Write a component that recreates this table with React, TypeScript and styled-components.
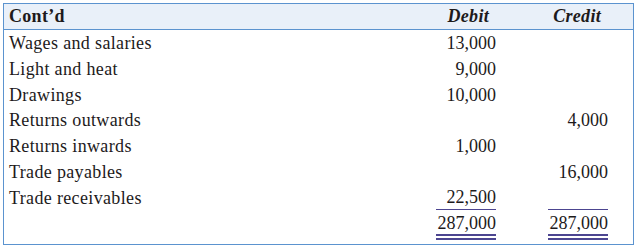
import styled, { createGlobalStyle } from 'styled-components'

const GlobalStyle = createGlobalStyle`
  html, body {
    margin: 0;
    padding: 0;
    background: #ffffff;
  }
  body {
    font-family: 'Liberation Serif', 'Times New Roman', serif;
    color: #1d1a1b;
  }
`

const Page = styled.div`
  width: 637px;
  height: 248px;
  padding: 3px 3px 0 3px;
  box-sizing: border-box;
`

const Box = styled.div`
  width: 631px;
  height: 242px;
  box-sizing: border-box;
  border: 1.5px solid #5b93cf;
  background: #fff;
`

const Grid = styled.div`
  display: grid;
  grid-template-columns: 1fr 60px 60px;
  column-gap: 52px;
  padding: 0 25px 0 5px;
`

const HeaderRow = styled(Grid)`
  height: 25px;
  align-items: center;
  background: #e9f0f9;
  border-bottom: 1.5px solid #5b93cf;
`

const Row = styled(Grid)<{ $total?: boolean }>`
  height: ${(p) => (p.$total ? '28px' : '25.75px')};
  align-items: center;
  box-sizing: border-box;
  padding-top: ${(p) => (p.$total ? '0' : '1.5px')};
`

const HeadCell = styled.div<{ $right?: boolean }>`
  font-size: 18px;
  font-weight: bold;
  font-style: ${(p) => (p.$right ? 'italic' : 'normal')};
  text-align: ${(p) => (p.$right ? 'right' : 'left')};
  padding-right: ${(p) => (p.$right ? '7px' : '0')};
  letter-spacing: 0.3px;
`

const Label = styled.div`
  font-size: 18px;
  letter-spacing: 0.35px;
  white-space: nowrap;
`

const Amount = styled.div<{ $rule?: 'single' | 'double' }>`
  font-size: 18px;
  height: 100%;
  display: flex;
  align-items: center;
  justify-content: flex-end;
  box-sizing: border-box;
  ${(p) =>
    p.$rule === 'single' &&
    `
    border-bottom: 1.5px solid #4c4590;
  `}
  ${(p) =>
    p.$rule === 'double' &&
    `
    border-bottom: 6px double #4c4590;
    padding-top: 3px;
  `}
`

type Line = { label: string; debit?: string; credit?: string }

const lines: Line[] = [
  { label: 'Wages and salaries', debit: '13,000' },
  { label: 'Light and heat', debit: '9,000' },
  { label: 'Drawings', debit: '10,000' },
  { label: 'Returns outwards', credit: '4,000' },
  { label: 'Returns inwards', debit: '1,000' },
  { label: 'Trade payables', credit: '16,000' },
]

export default function App() {
  return (
    <Page>
      <GlobalStyle />
      <Box>
        <HeaderRow>
          <HeadCell>Cont’d</HeadCell>
          <HeadCell $right>Debit</HeadCell>
          <HeadCell $right>Credit</HeadCell>
        </HeaderRow>
        {lines.map((l) => (
          <Row key={l.label}>
            <Label>{l.label}</Label>
            <Amount>{l.debit}</Amount>
            <Amount>{l.credit}</Amount>
          </Row>
        ))}
        <Row>
          <Label>Trade receivables</Label>
          <Amount $rule="single">22,500</Amount>
          <Amount $rule="single"></Amount>
        </Row>
        <Row $total>
          <Label></Label>
          <Amount $rule="double">287,000</Amount>
          <Amount $rule="double">287,000</Amount>
        </Row>
      </Box>
    </Page>
  )
}
